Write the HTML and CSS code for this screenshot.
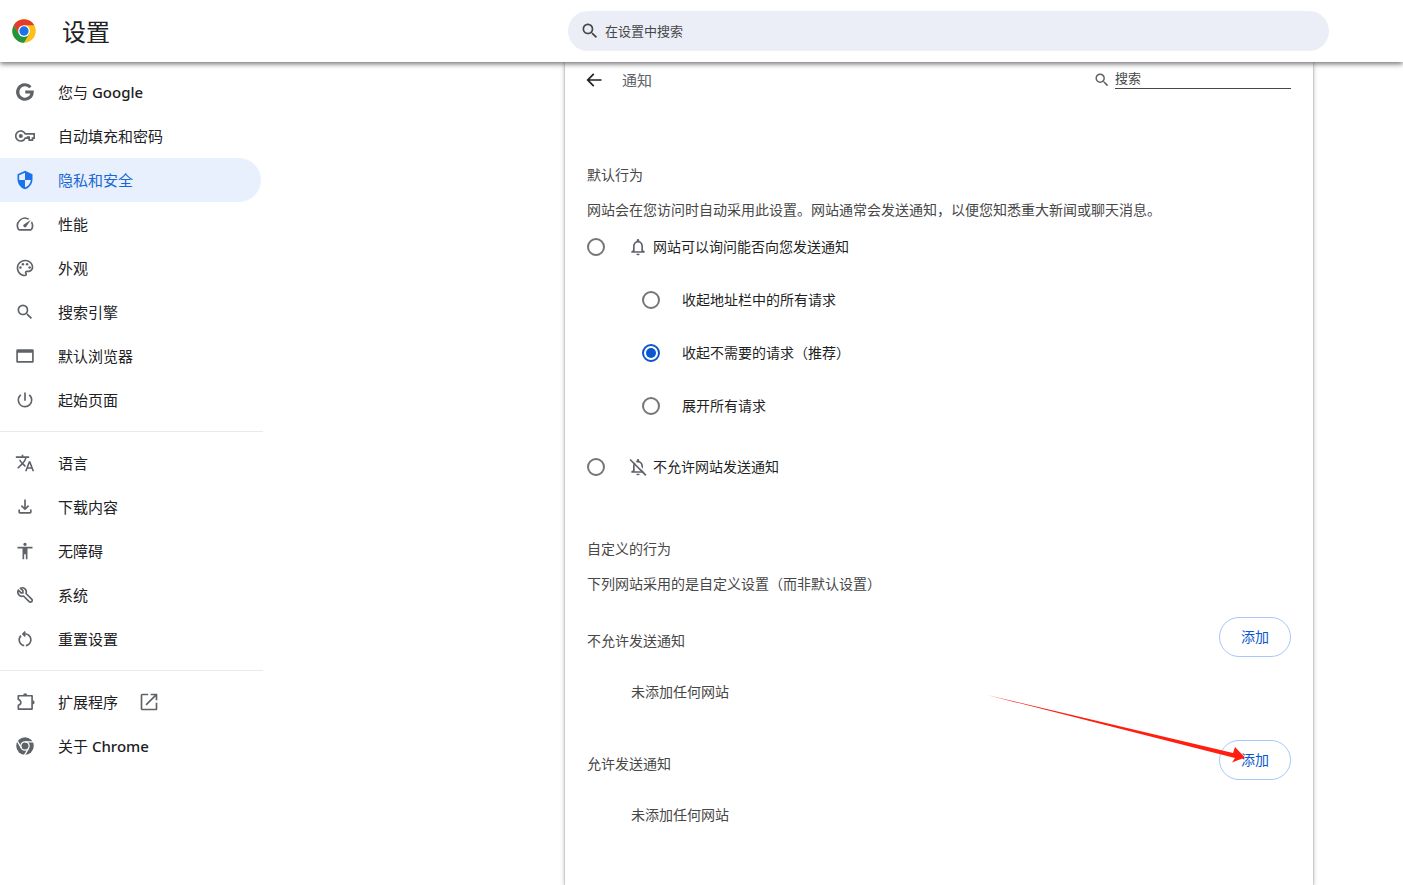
FILE: index.html
```html
<!DOCTYPE html>
<html lang="zh-CN">
<head>
<meta charset="utf-8">
<title>设置</title>
<link rel="stylesheet" href="styles.css">
</head>
<body>
<header class="topbar">
  <div class="brand">
    <svg class="logo" viewBox="0 0 48 48" aria-hidden="true">
      <circle cx="24" cy="24" r="23.5" fill="#fbc116"/>
      <path d="M3.65 12.25A23.5 23.5 0 0 1 44.35 12.25L24 12.25L13.8 29.9Z" fill="#e33b2e"/>
      <path d="M3.65 12.25A23.5 23.5 0 0 0 24 47.5L34.2 29.9L13.8 29.9Z" fill="#229342"/>
      <circle cx="24" cy="24" r="11.75" fill="#fff"/>
      <circle cx="24" cy="24" r="9.3" fill="#1a73e8"/>
    </svg>
    <h1 class="title">设置</h1>
  </div>
  <label class="searchbox">
    <svg class="icon" viewBox="0 0 24 24" aria-hidden="true"><path d="M15.5 14h-.79l-.28-.27A6.47 6.47 0 0 0 16 9.5 6.5 6.5 0 1 0 9.5 16c1.61 0 3.09-.59 4.23-1.57l.27.28v.79l5 4.99L20.49 19l-4.99-5zm-6 0C7.01 14 5 11.99 5 9.5S7.01 5 9.5 5 14 7.01 14 9.5 11.99 14 9.5 14z"/></svg>
    <input class="search-input" type="text" placeholder="在设置中搜索" aria-label="在设置中搜索">
  </label>
</header>

<div class="layout">
  <nav class="sidebar" aria-label="设置">
    <a class="item" href="#google"><svg class="icon" viewBox="0 0 24 24"><path fill="none" stroke="currentColor" stroke-width="3.800" d="M18.500 6.300A8.700 8.700 0 1 0 20.600 12H12.300"/></svg><span>您与 <span class="latin">Google</span></span></a>
    <a class="item" href="#autofill"><svg class="icon" viewBox="0 0 24 24"><path fill="none" stroke="currentColor" stroke-width="2" d="M12.300 9.500A6 6 0 1 0 12.300 14.500H15V13.300H17V17H21V14.500H23V9.500Z"/><circle cx="7" cy="12" r="2.500"/></svg>自动填充和密码</a>
    <a class="item selected" href="#privacy" aria-current="page"><svg class="icon" viewBox="0 0 24 24"><path d="M12 1 3 5v6c0 5.550 3.840 10.740 9 12 5.160-1.260 9-6.450 9-12V5l-9-4zm0 10.990h7c-.53 4.120-3.280 7.790-7 8.940V12H5V6.300l7-3.110v8.800z"/></svg>隐私和安全</a>
    <a class="item" href="#performance"><svg class="icon" viewBox="0 0 24 24"><path d="m20.380 8.570-1.230 1.850a8 8 0 0 1-.22 7.580H5.070A8 8 0 0 1 15.580 6.850l1.850-1.230A10 10 0 0 0 3.350 19a2 2 0 0 0 1.720 1h13.850a2 2 0 0 0 1.740-1 10 10 0 0 0-.27-10.440zm-9.790 6.840a2 2 0 0 0 2.830 0l5.660-8.490-8.490 5.660a2 2 0 0 0 0 2.830z"/></svg>性能</a>
    <a class="item" href="#appearance"><svg class="icon" viewBox="0 0 24 24"><path d="M12 22C6.490 22 2 17.510 2 12S6.490 2 12 2s10 4.040 10 9c0 3.310-2.690 6-6 6h-1.770c-.28 0-.5.22-.5.5 0 .12.050.23.130.33.41.47.64 1.060.64 1.670A2.500 2.500 0 0 1 12 22zm0-18c-4.410 0-8 3.590-8 8s3.590 8 8 8c.28 0 .5-.22.5-.5a.54.54 0 0 0-.14-.35c-.41-.46-.63-1.050-.63-1.650a2.500 2.500 0 0 1 2.500-2.500H16c2.210 0 4-1.790 4-4 0-3.860-3.590-7-8-7z"/><circle cx="6.500" cy="11.500" r="1.500"/><circle cx="9.500" cy="7.500" r="1.500"/><circle cx="14.500" cy="7.500" r="1.500"/><circle cx="17.500" cy="11.500" r="1.500"/></svg>外观</a>
    <a class="item" href="#search"><svg class="icon" viewBox="0 0 24 24"><path d="M15.500 14h-.79l-.28-.27A6.470 6.470 0 0 0 16 9.500 6.500 6.500 0 1 0 9.500 16c1.610 0 3.090-.59 4.230-1.570l.27.28v.79l5 4.990L20.490 19l-4.990-5zm-6 0C7.010 14 5 11.990 5 9.500S7.010 5 9.500 5 14 7.010 14 9.500 11.990 14 9.500 14z"/></svg>搜索引擎</a>
    <a class="item" href="#browser"><svg class="icon" viewBox="0 0 24 24"><path d="M21 4H3a1.500 1.500 0 0 0-1.500 1.500v13A1.500 1.500 0 0 0 3 20h18a1.500 1.500 0 0 0 1.500-1.500v-13A1.500 1.500 0 0 0 21 4zm-.5 14h-17V8h17z"/></svg>默认浏览器</a>
    <a class="item" href="#startup"><svg class="icon" viewBox="0 0 24 24"><path d="M13 3h-2v10h2V3zm4.830 2.170-1.420 1.420A6.920 6.920 0 0 1 19 12c0 3.870-3.130 7-7 7A6.995 6.995 0 0 1 7.580 6.580L6.170 5.170A8.932 8.932 0 0 0 3 12a9 9 0 0 0 18 0c0-2.740-1.230-5.180-3.170-6.830z"/></svg>起始页面</a>
    <hr class="divider">
    <a class="item" href="#languages"><svg class="icon" viewBox="0 0 24 24"><path d="m12.870 15.070-2.540-2.510.03-.03A17.520 17.520 0 0 0 14.070 6H17V4h-7V2H8v2H1v1.990h11.170C11.500 7.920 10.440 9.750 9 11.350 8.070 10.320 7.300 9.190 6.690 8h-2c.73 1.630 1.730 3.170 2.980 4.560l-5.090 5.020L4 19l5-5 3.110 3.110.76-2.040zM18.500 10h-2L12 22h2l1.120-3h4.750L21 22h2l-4.500-12zm-2.620 7 1.620-4.330L19.120 17h-3.240z"/></svg>语言</a>
    <a class="item" href="#downloads"><svg class="icon" viewBox="0 0 24 24"><path d="m12 16-5-5 1.400-1.450 2.600 2.600V3h2v9.150l2.600-2.600L17 11zM6 20a2 2 0 0 1-2-2v-3h2v3h12v-3h2v3a2 2 0 0 1-2 2z"/></svg>下载内容</a>
    <a class="item" href="#accessibility"><svg class="icon" viewBox="0 0 24 24"><path d="M12 2c1.100 0 2 .9 2 2s-.9 2-2 2-2-.9-2-2 .9-2 2-2zm9 7h-6v13h-2v-6h-2v6H9V9H3V7h18v2z"/></svg>无障碍</a>
    <a class="item" href="#system"><svg class="icon" viewBox="0 0 24 24"><path fill="none" stroke="currentColor" stroke-width="2" stroke-linejoin="round" d="M4 6.200A5 5 0 0 0 10.200 13.200L17 20A1.700 1.700 0 0 0 20 17L13.200 10.200A5 5 0 0 0 6.500 3.800L9.500 6.800V9.500H7.300Z"/></svg>系统</a>
    <a class="item" href="#reset"><svg class="icon" viewBox="0 0 24 24"><path d="M11 20.950a8.050 8.050 0 0 1-5.010-2.710A7.860 7.860 0 0 1 4 13c0-1.100.22-2.150.65-3.160a8.400 8.400 0 0 1 1.850-2.640l1.430 1.430A6 6 0 0 0 6 13c0 1.470.47 2.760 1.400 3.880A6.060 6.060 0 0 0 11 18.930zm2 0v-2.020A5.990 5.990 0 0 0 18 13c0-1.670-.58-3.080-1.750-4.250S13.670 7 12 7h-.08l1.100 1.100-1.400 1.400-3.500-3.500 3.500-3.500 1.400 1.400L11.920 5H12c2.230 0 4.130.77 5.680 2.330S20 10.770 20 13c0 2.020-.67 3.780-2 5.290s-3 2.400-5 2.660z"/></svg>重置设置</a>
    <hr class="divider">
    <a class="item" href="#extensions"><svg class="icon" viewBox="0 0 24 24"><path fill="none" stroke="currentColor" stroke-width="2" stroke-linejoin="round" d="M4 4.500H20.500V20.500H4V16Q7 15 7 12.500T4 9Z"/><path d="M9.800 4a2.400 2.400 0 0 1 4.800 0zM21 10a2.500 2.500 0 0 1 0 5z"/></svg>扩展程序<svg class="icon external" viewBox="0 0 24 24"><path d="M20 20H4V4h7V2H4a2 2 0 0 0-2 2v16a2 2 0 0 0 2 2h16c1.100 0 2-.9 2-2v-7h-2v7zM14 2v2h4.590L7.760 14.830l1.410 1.410L20 5.410V10h2V2h-8z"/></svg></a>
    <a class="item" href="#about"><svg class="icon" viewBox="0 0 24 24"><circle cx="12" cy="12" r="10.500"/><circle cx="12" cy="12" r="5" fill="none" stroke="#fff" stroke-width="1.500"/><path fill="none" stroke="#fff" stroke-width="1.500" d="M12 7H22M7.700 14.500 2.700 5.800M16.300 14.500 11.300 23.200"/></svg><span>关于 <span class="latin">Chrome</span></span></a>
  </nav>

  <main class="panel">
    <div class="toolbar">
      <button class="back" type="button" aria-label="返回"><svg class="icon" viewBox="0 0 24 24"><path d="M21 11H6.830l5.590-5.590L11 4l-8 8 8 8 1.410-1.410L6.830 13H21v-2z"/></svg></button>
      <h2 class="page-title">通知</h2>
      <label class="local-search">
        <svg class="icon small" viewBox="1 1 22 22"><path d="M15.500 14h-.79l-.28-.27A6.470 6.470 0 0 0 16 9.500 6.500 6.500 0 1 0 9.500 16c1.610 0 3.090-.59 4.230-1.570l.27.28v.79l5 4.990L20.490 19l-4.990-5zm-6 0C7.010 14 5 11.990 5 9.500S7.010 5 9.500 5 14 7.010 14 9.500 11.990 14 9.500 14z"/></svg>
        <input class="local-input" type="text" placeholder="搜索" aria-label="搜索">
      </label>
    </div>

    <section class="section">
      <h3 class="heading">默认行为</h3>
      <p class="text">网站会在您访问时自动采用此设置。网站通常会发送通知，以便您知悉重大新闻或聊天消息。</p>
      <div class="options">
        <label class="option"><input class="radio" type="radio" name="default"><svg class="icon bell" viewBox="0 0 24 24"><path d="M12 22c1.100 0 2-.9 2-2h-4c0 1.100.9 2 2 2zm6-6v-5c0-3.070-1.630-5.640-4.500-6.320V4a1.500 1.500 0 0 0-3 0v.68C7.640 5.360 6 7.920 6 11v5l-2 1v2h16v-2zm-2 1H8v-6c0-2.480 1.510-4.500 4-4.500s4 2.020 4 4.500z"/></svg>网站可以询问能否向您发送通知</label>
        <div class="suboptions">
          <label class="option"><input class="radio" type="radio" name="prompt">收起地址栏中的所有请求</label>
          <label class="option"><input class="radio" type="radio" name="prompt" checked>收起不需要的请求（推荐）</label>
          <label class="option"><input class="radio" type="radio" name="prompt">展开所有请求</label>
        </div>
        <label class="option"><input class="radio" type="radio" name="default"><svg class="icon bell" viewBox="0 0 24 24"><path d="M12 22c1.100 0 2-.9 2-2h-4c0 1.100.9 2 2 2zm6-6v-5c0-3.070-1.630-5.640-4.500-6.320V4a1.500 1.500 0 0 0-3 0v.68C7.640 5.360 6 7.920 6 11v5l-2 1v2h16v-2zm-2 1H8v-6c0-2.480 1.510-4.500 4-4.500s4 2.020 4 4.500z"/><path fill="none" stroke="#fff" stroke-width="2" d="M4.500 2 22.500 20"/><path fill="none" stroke="currentColor" stroke-width="2" d="M2.500 3 21.500 22"/></svg>不允许网站发送通知</label>
      </div>
    </section>

    <section class="section custom">
      <h3 class="heading">自定义的行为</h3>
      <p class="text">下列网站采用的是自定义设置（而非默认设置）</p>
      <div class="site-list">
        <div class="list-head"><h4 class="heading">不允许发送通知</h4><button class="add" type="button">添加</button></div>
        <p class="empty">未添加任何网站</p>
      </div>
      <div class="site-list">
        <div class="list-head"><h4 class="heading">允许发送通知</h4><button class="add" type="button">添加</button>
          <svg class="pointer" viewBox="0 0 262 72" aria-hidden="true"><path d="M2 2 248 60 250 54 260 64.500 247 69.500 250 65 246 64Z"/></svg>
        </div>
        <p class="empty">未添加任何网站</p>
      </div>
    </section>
  </main>
</div>
</body>
</html>
```
FILE: styles.css
```css
* {
  box-sizing: border-box;
}

body {
  display: flex;
  flex-direction: column;
  min-height: 100vh;
  margin: 0;
  background: #fff;
  color: #202124;
  font-family: "Noto Sans", "Noto Sans CJK SC", sans-serif;
  font-size: 14px;
  line-height: 20px;
}

h1, h2, h3, h4, p {
  margin: 0;
  font-weight: 400;
}

input, button {
  font-family: inherit;
}

.icon {
  flex: none;
  width: 20px;
  height: 20px;
  fill: currentColor;
  color: #5f6368;
}

/* Top bar */
.topbar {
  position: relative;
  z-index: 1;
  display: flex;
  align-items: center;
  justify-content: space-between;
  height: 62px;
  padding: 0 74px 0 12px;
  background: #fff;
  box-shadow: 0 2px 5px rgba(0, 0, 0, .55);
}

.brand {
  display: flex;
  align-items: center;
  gap: 26px;
}

.logo {
  width: 24px;
  height: 24px;
}

.title {
  padding-top: 2px;
  font-size: 24px;
  line-height: 32px;
}

.searchbox {
  display: flex;
  flex: 0 1 761px;
  align-items: center;
  gap: 5px;
  height: 40px;
  padding: 0 12px;
  border-radius: 20px;
  background: #ebeef7;
}

.searchbox .icon {
  color: #474747;
}

.search-input {
  flex: 1;
  min-width: 0;
  padding: 0;
  border: 0;
  outline: 0;
  background: transparent;
  font-size: 13px;
  line-height: 20px;
}

.search-input::placeholder,
.local-input::placeholder {
  color: #474747;
  opacity: 1;
}

/* Page body */
.layout {
  display: flex;
  flex: 1;
  justify-content: space-between;
  padding-right: 90px;
}

.sidebar {
  flex: 0 0 263px;
  padding: 8px 0;
}

.item {
  display: flex;
  align-items: center;
  height: 44px;
  margin-right: 2px;
  padding-left: 15px;
  border-radius: 0 22px 22px 0;
  color: #202124;
  font-size: 15px;
  text-decoration: none;
}

.latin {
  font-weight: 500;
}

.item .icon {
  margin-right: 23px;
}

.item .external {
  margin: 0 0 0 21px;
}

.selected {
  background: #e8f0fe;
  color: #1967d2;
}

.selected .icon {
  color: #1a73e8;
}

.divider {
  height: 1px;
  margin: 9px 0;
  border: 0;
  background: #e8eaed;
}

.panel {
  flex: 0 1 748px;
  padding: 0 22px 60px;
  background: #fff;
  box-shadow: 0 0 1px rgba(0, 0, 0, .5), 0 1px 5px rgba(0, 0, 0, .3);
}

.toolbar {
  display: flex;
  align-items: center;
  height: 36px;
}

.back {
  display: flex;
  margin: 0 18px 0 -3px;
  padding: 0;
  border: 0;
  background: none;
}

.back .icon {
  color: #202124;
}

.page-title {
  color: #5f6368;
  font-size: 15px;
}

.local-search {
  display: flex;
  flex: 0 1 197px;
  align-items: center;
  gap: 5px;
  min-width: 0;
  margin-left: auto;
}

.small {
  width: 16px;
  height: 16px;
}

.local-input {
  flex: 1;
  min-width: 0;
  height: 20px;
  margin-bottom: 2px;
  padding: 0 0 2px;
  border: 0;
  border-bottom: 1px solid #474747;
  border-radius: 0;
  outline: 0;
  background: transparent;
  font-size: 13px;
}

.section {
  padding-top: 67px;
}

.custom {
  padding-top: 62px;
}

.heading,
.text,
.empty {
  color: #474747;
  font-size: 14px;
}

.text {
  margin-top: 15px;
}

.options {
  margin-top: 17px;
}

.option {
  display: flex;
  align-items: center;
  height: 20px;
  color: #1f1f1f;
}

.radio {
  display: grid;
  flex: none;
  place-content: center;
  width: 18px;
  height: 18px;
  margin: 0;
  border: 2px solid #747775;
  border-radius: 50%;
  appearance: none;
}

.radio:checked {
  border-color: #0b57d0;
}

.radio:checked::before {
  width: 10px;
  height: 10px;
  border-radius: 50%;
  background: #0b57d0;
  content: "";
}

.bell {
  margin: 0 5px 0 23px;
}

.suboptions {
  display: flex;
  flex-direction: column;
  gap: 33px;
  margin: 33px 0 41px;
  padding-left: 55px;
}

.suboptions .option {
  gap: 22px;
}

.site-list {
  padding-top: 23px;
}

.site-list + .site-list {
  padding-top: 38px;
}

.list-head {
  position: relative;
  display: flex;
  align-items: center;
  justify-content: space-between;
}

.list-head .heading {
  padding-top: 8px;
}

.add {
  height: 40px;
  padding: 0 21px 2px;
  border: 1px solid #a8c7fa;
  border-radius: 20px;
  background: #fff;
  color: #0b57d0;
  font-size: 14px;
}

.pointer {
  position: absolute;
  top: -47px;
  right: 44px;
  width: 262px;
  height: 72px;
  fill: #ff1e10;
  pointer-events: none;
}

.empty {
  margin-top: 25px;
  padding-left: 44px;
}
```
